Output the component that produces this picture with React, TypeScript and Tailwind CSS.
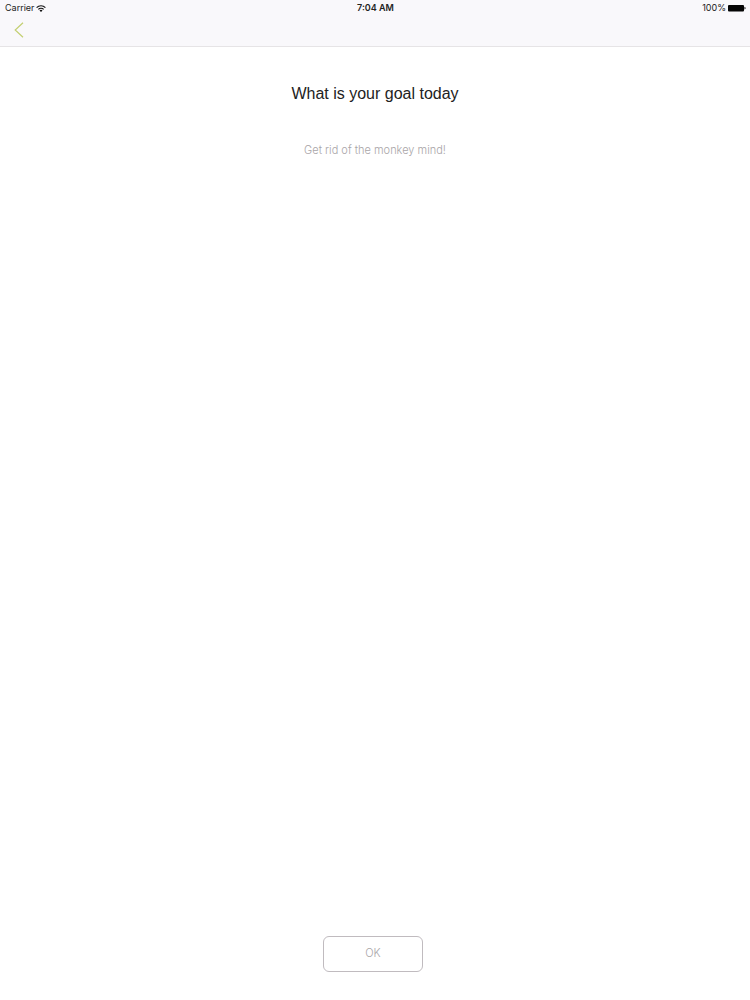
import { useState } from "react";

function WifiIcon() {
  return (
    <svg viewBox="0 0 20 14" className="h-[7px] w-[10px]" aria-hidden="true">
      <g fill="none" stroke="#111" strokeWidth="2.4">
        <path d="M1.2 5.2a12.4 12.4 0 0 1 17.6 0" />
        <path d="M4.7 8.7a7.5 7.5 0 0 1 10.6 0" />
      </g>
      <path d="M10 14l-3-3.1a4.3 4.3 0 0 1 6 0z" fill="#111" />
    </svg>
  );
}

function BatteryIcon() {
  return (
    <svg viewBox="0 0 18 8" className="h-2 w-[18px]" aria-hidden="true">
      <rect x="0" y="1" width="16" height="6.4" rx="1" fill="#050505" />
      <path d="M16.5 2.8c1.4.2 1.4 2.6 0 2.8z" fill="#050505" />
    </svg>
  );
}

function StatusBar() {
  return (
    <div className="grid h-4 grid-cols-3 items-center pl-[5px] pr-1 text-[9px] leading-4 text-[#222]">
      <div className="flex items-center gap-px">
        <span>Carrier</span>
        <WifiIcon />
      </div>
      <div className="text-center font-semibold">7:04 AM</div>
      <div className="flex items-center justify-end gap-[2px]">
        <span>100%</span>
        <BatteryIcon />
      </div>
    </div>
  );
}

export default function App() {
  const [goal, setGoal] = useState("");
  return (
    <div className="flex min-h-screen flex-col bg-white font-['Inter','Liberation_Sans',sans-serif]">
      <header className="border-b border-[#e6e4e6] bg-[#f9f8fb]">
        <StatusBar />
        <nav className="flex h-[30px] items-center px-[14px]">
          <button type="button" aria-label="Back" className="flex pb-[2px]">
            <svg viewBox="0 0 10 16" className="h-4 w-[10px]" fill="none" stroke="#c3cf72" strokeWidth="1.2" aria-hidden="true">
              <path d="M9 0.7L1.2 8L9 15.3" />
            </svg>
          </button>
        </nav>
      </header>
      <main className="flex grow flex-col items-center px-4 pb-7 pt-[35px]">
        <label htmlFor="goal" className="font-['Liberation_Sans',sans-serif] text-base leading-6 text-[#222]">
          What is your goal today
        </label>
        <input
          id="goal"
          type="text"
          value={goal}
          onChange={(e) => setGoal(e.target.value)}
          placeholder="Get rid of the monkey mind!"
          className="mt-8 h-6 w-full max-w-md text-center text-[11px] font-light text-[#222] outline-none placeholder:text-[#a9a5a8]"
        />
        <button
          type="button"
          className="mr-1 mt-auto h-9 w-[100px] rounded-md border border-[#c0bbbf] pb-[2px] text-[11px] font-light text-[#a9a5a8]"
        >
          OK
        </button>
      </main>
    </div>
  );
}
